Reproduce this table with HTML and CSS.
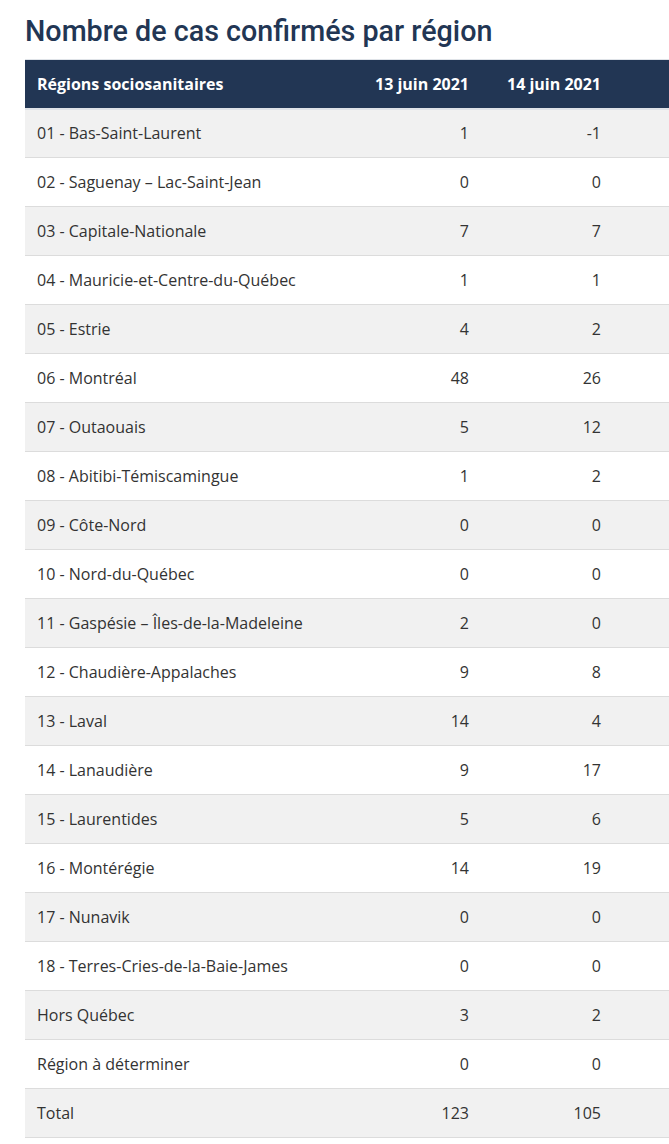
FILE: index.html
```html
<!DOCTYPE html>
<html lang="fr">
<head>
<meta charset="utf-8">
<title>Nombre de cas confirmés par région</title>
<link rel="stylesheet" href="styles.css">
</head>
<body>
<main class="page">
  <h2 class="title">Nombre de cas confirmés par région</h2>
  <table class="cases">
    <thead>
      <tr>
        <th class="region">Régions sociosanitaires</th>
        <th class="num">13 juin 2021</th>
        <th class="num">14 juin 2021</th>
        <th class="spacer"></th>
      </tr>
    </thead>
    <tbody>
      <tr><td>01 - Bas-Saint-Laurent</td><td class="num">1</td><td class="num">-1</td><td></td></tr>
      <tr><td>02 - Saguenay – Lac-Saint-Jean</td><td class="num">0</td><td class="num">0</td><td></td></tr>
      <tr><td>03 - Capitale-Nationale</td><td class="num">7</td><td class="num">7</td><td></td></tr>
      <tr><td>04 - Mauricie-et-Centre-du-Québec</td><td class="num">1</td><td class="num">1</td><td></td></tr>
      <tr><td>05 - Estrie</td><td class="num">4</td><td class="num">2</td><td></td></tr>
      <tr><td>06 - Montréal</td><td class="num">48</td><td class="num">26</td><td></td></tr>
      <tr><td>07 - Outaouais</td><td class="num">5</td><td class="num">12</td><td></td></tr>
      <tr><td>08 - Abitibi-Témiscamingue</td><td class="num">1</td><td class="num">2</td><td></td></tr>
      <tr><td>09 - Côte-Nord</td><td class="num">0</td><td class="num">0</td><td></td></tr>
      <tr><td>10 - Nord-du-Québec</td><td class="num">0</td><td class="num">0</td><td></td></tr>
      <tr><td>11 - Gaspésie – Îles-de-la-Madeleine</td><td class="num">2</td><td class="num">0</td><td></td></tr>
      <tr><td>12 - Chaudière-Appalaches</td><td class="num">9</td><td class="num">8</td><td></td></tr>
      <tr><td>13 - Laval</td><td class="num">14</td><td class="num">4</td><td></td></tr>
      <tr><td>14 - Lanaudière</td><td class="num">9</td><td class="num">17</td><td></td></tr>
      <tr><td>15 - Laurentides</td><td class="num">5</td><td class="num">6</td><td></td></tr>
      <tr><td>16 - Montérégie</td><td class="num">14</td><td class="num">19</td><td></td></tr>
      <tr><td>17 - Nunavik</td><td class="num">0</td><td class="num">0</td><td></td></tr>
      <tr><td>18 - Terres-Cries-de-la-Baie-James</td><td class="num">0</td><td class="num">0</td><td></td></tr>
      <tr><td>Hors Québec</td><td class="num">3</td><td class="num">2</td><td></td></tr>
      <tr><td>Région à déterminer</td><td class="num">0</td><td class="num">0</td><td></td></tr>
      <tr><td>Total</td><td class="num">123</td><td class="num">105</td><td></td></tr>
    </tbody>
  </table>
</main>
</body>
</html>
```
FILE: styles.css
```css
html, body {
  margin: 0;
  padding: 0;
  background: #ffffff;
}

.page {
  padding: 14px 0 0 25px;
}

.title {
  margin: 0 0 10px 0;
  font-family: Roboto, "Liberation Sans", sans-serif;
  font-weight: 500;
  font-size: 28.7px;
  line-height: 35px;
  color: #223654;
}

.cases {
  width: 644px;
  border-collapse: collapse;
  font-family: "Open Sans", "Liberation Sans", sans-serif;
  font-size: 16px;
  color: #333333;
  table-layout: fixed;
}

.cases thead tr {
  background: #223654;
  border-top: 1px solid #dfe3e8;
  border-bottom: 2px solid #dfe3e8;
}

.cases th {
  height: 49px;
  padding: 0 12px;
  color: #ffffff;
  font-weight: 700;
  text-align: left;
  box-sizing: border-box;
}

.cases th.region { width: 324px; }
.cases th.num { width: 132px; }
.cases th.spacer { width: auto; }

.cases td {
  height: 49px;
  padding: 0 12px;
  box-sizing: border-box;
}

.cases tbody tr {
  border-bottom: 1px solid #dcdcdc;
}

.cases tbody tr:nth-child(odd) {
  background: #f1f1f1;
}

.cases .num {
  text-align: right;
}
```
